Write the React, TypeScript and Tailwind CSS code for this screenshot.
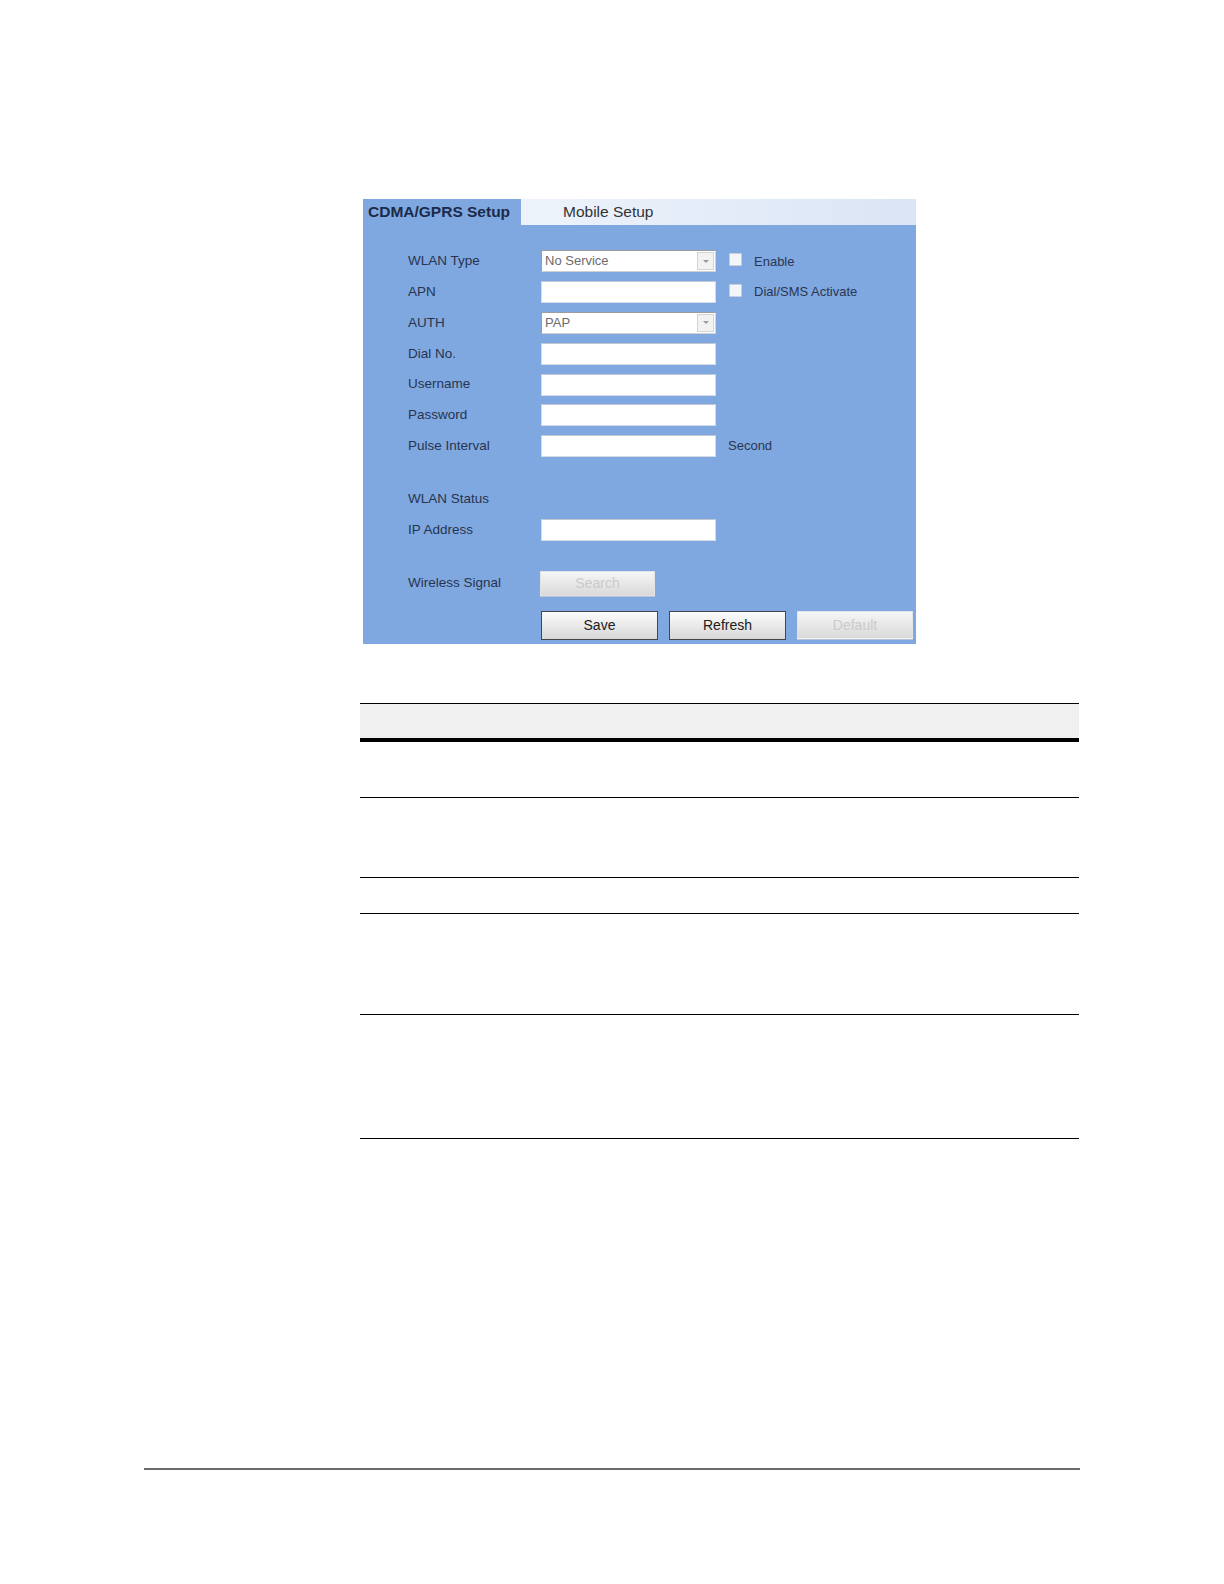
import React from 'react';

interface FieldRow {
  label: string;
  kind: 'select' | 'input';
  value?: string;
  extra?: React.ReactNode;
}

function Checkbox({ label }: { label: string }) {
  return (
    <div className="flex items-center ml-[13px]">
      <div className="w-[13px] h-[13px] bg-[#f3f5f9] border border-[#c5cfdf] rounded-[1px] -mt-[3px]" />
      <span className="ml-[12px] text-[13px] text-[#2a3652]">{label}</span>
    </div>
  );
}

function Select({ value }: { value: string }) {
  return (
    <div className="flex w-[175px] h-[22px] bg-white border border-[#9c9c9c] border-r-[#d0d0d0] border-b-[#d0d0d0]">
      <span className="flex-1 pl-[3px] text-[13px] leading-[20px] text-[#6b6b6b]">{value}</span>
      <div className="w-[17px] h-[18px] mt-[1px] mr-[1px] bg-[#f2f2f2] border border-[#d4d4d4] flex items-center justify-center">
        <div className="w-0 h-0 border-l-[3px] border-r-[3px] border-t-[3px] border-l-transparent border-r-transparent border-t-[#9a9a9a]" />
      </div>
    </div>
  );
}

function TextBox() {
  return <div className="w-[175px] h-[22px] bg-white border border-[#d6dce6] border-t-[#c2c8d2]" />;
}

function Btn({ label, disabled }: { label: string; disabled?: boolean }) {
  return (
    <div
      className={
        disabled
          ? 'w-[116px] h-[28px] flex items-center justify-center bg-gradient-to-b from-[#f6f6f6] to-[#d9d9d9] border border-[#e3e3e3] border-b-[#f2f2f2] text-[14px] text-[#cacaca] shadow-[0_1px_0_#b8c4d8]'
          : 'w-[117px] h-[28.5px] flex items-center justify-center bg-gradient-to-b from-[#fcfcfc] to-[#d7d7d7] border border-[#464646] text-[14px] text-[#202020]'
      }>
      {label}
    </div>
  );
}

const rows: FieldRow[] = [
  { label: 'WLAN Type', kind: 'select', value: 'No Service', extra: <Checkbox label="Enable" /> },
  { label: 'APN', kind: 'input', extra: <Checkbox label="Dial/SMS Activate" /> },
  { label: 'AUTH', kind: 'select', value: 'PAP' },
  { label: 'Dial No.', kind: 'input' },
  { label: 'Username', kind: 'input' },
  { label: 'Password', kind: 'input' },
  {
    label: 'Pulse Interval',
    kind: 'input',
    extra: <span className="ml-[12px] text-[13px] text-[#2a3652]">Second</span>
  }
];

function Row({ label, children }: { label: string; children?: React.ReactNode }) {
  return (
    <div className="flex items-center h-[30.8px]">
      <div className="w-[133px] text-[13.5px] text-[#27344f]">{label}</div>
      {children}
    </div>
  );
}

function SetupPanel() {
  return (
    <div className="w-[553px] h-[445px] bg-[#80a8e0] flex flex-col">
      {/* tab bar */}
      <div className="flex h-[26px]">
        <div className="w-[158px] pl-[5px] flex items-center text-[15.5px] font-bold text-[#1c2a49]">CDMA/GPRS Setup</div>
        <div className="flex-1 pl-[42px] flex items-center bg-gradient-to-r from-[#eef3fb] to-[#dae5f5] text-[15.5px] text-[#333333]">
          Mobile Setup
        </div>
      </div>
      {/* form */}
      <div className="pl-[45px] pt-[21px] flex flex-col">
        {rows.map((r) => (
          <Row key={r.label} label={r.label}>
            {r.kind === 'select' ? <Select value={r.value || ''} /> : <TextBox />}
            {r.extra}
          </Row>
        ))}
        <div className="mt-[22px]">
          <Row label="WLAN Status" />
          <Row label="IP Address">
            <TextBox />
          </Row>
        </div>
        <div className="mt-[22.5px]">
          <Row label="Wireless Signal">
            <div className="-ml-[1px]">
              <div className="w-[115px] h-[25px] flex items-center justify-center bg-gradient-to-b from-[#f6f6f6] to-[#d9d9d9] border border-[#e3e3e3] text-[14px] text-[#cacaca] shadow-[0_1px_0_#b8c4d8]">
                Search
              </div>
            </div>
          </Row>
        </div>
        <div className="flex gap-[11px] pl-[133px] mt-[13px]">
          <Btn label="Save" />
          <Btn label="Refresh" />
          <Btn label="Default" disabled />
        </div>
      </div>
    </div>
  );
}

function App(): JSX.Element {
  return (
    <div className="w-[1224px] min-h-[1584px] bg-white font-['Liberation_Sans',Arial,sans-serif]">
      <div className="pt-[199px] pl-[363px]">
        <SetupPanel />
      </div>
      {/* table */}
      <div className="mt-[59px] ml-[360px] w-[719px]">
        <div className="h-[34.5px] bg-[#f0f0f0] border-t border-black" />
        <div className="h-[4px] bg-black" />
        <div className="h-[56px] border-b border-black" />
        <div className="h-[80px] border-b border-black" />
        <div className="h-[36px] border-b border-black" />
        <div className="h-[101.5px] border-b border-black" />
        <div className="h-[123.5px] border-b border-black" />
      </div>
      {/* footer rule */}
      <div className="mt-[329px] ml-[144px] w-[936px] h-[2px] bg-[#6a6a6a]" />
    </div>
  );
}

export default App;
